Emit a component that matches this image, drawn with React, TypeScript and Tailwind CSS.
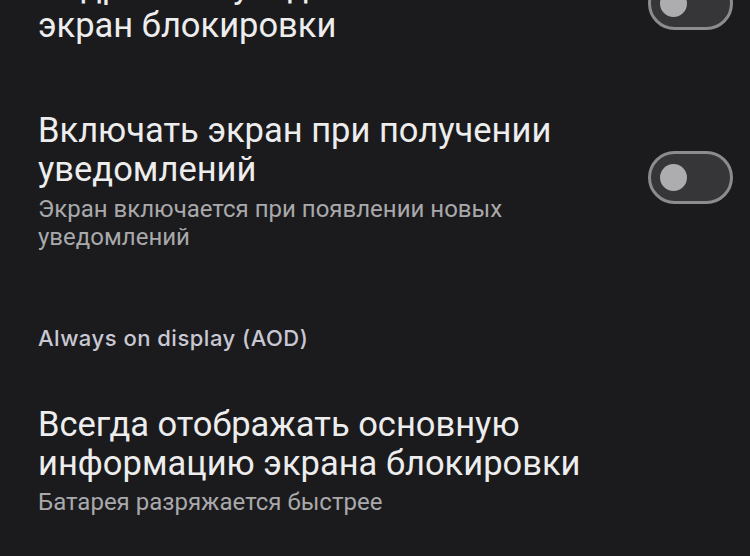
import React from "react";

function Toggle({ className = "" }: { className?: string }) {
  return (
    <div
      className={`w-[85px] h-[53px] rounded-full border-[3px] border-[#8c8c8e] bg-[#363638] shrink-0 flex items-center pl-[9px] ${className}`}
    >
      <div className="w-[27px] h-[27px] rounded-full bg-[#adadaf]" />
    </div>
  );
}

export default function App() {
  return (
    <div
      className="w-[750px] h-[556px] overflow-hidden bg-[#1b1b1d] text-[#ededed]"
      style={{ fontFamily: "Roboto, 'Noto Sans', sans-serif" }}
    >
      <div className="pl-[38px] pr-[17px]">
        {/* item 1 */}
        <div className="flex items-start justify-between -mt-[33px]">
          <div className="text-[34.5px] leading-[39px]">
            <div>Подробные уведомления на</div>
            <div>экран блокировки</div>
          </div>
          <Toggle className="mt-[10px]" />
        </div>

        {/* item 2 */}
        <div className="flex items-start justify-between mt-[66px]">
          <div>
            <div className="text-[34.5px] leading-[39px]">
              <div>Включать экран при получении</div>
              <div>уведомлений</div>
            </div>
            <div className="text-[24px] leading-[28px] text-[#a9a9ab] mt-[6px] w-[560px]">
              Экран включается при появлении новых уведомлений
            </div>
          </div>
          <Toggle className="mt-[40px]" />
        </div>

        {/* header */}
        <div
          className="mt-[73px] text-[22px] leading-[28px] font-medium tracking-[0.5px] text-[#c8c8d4]"
          style={{ fontFamily: "Inter, sans-serif" }}
        >
          Always on display (AOD)
        </div>

        {/* item 3 */}
        <div className="mt-[53px]">
          <div className="text-[34.5px] leading-[39px]">
            <div>Всегда отображать основную</div>
            <div>информацию экрана блокировки</div>
          </div>
          <div className="text-[24px] leading-[28px] text-[#a9a9ab] mt-[5px]">
            Батарея разряжается быстрее
          </div>
        </div>
      </div>
    </div>
  );
}
